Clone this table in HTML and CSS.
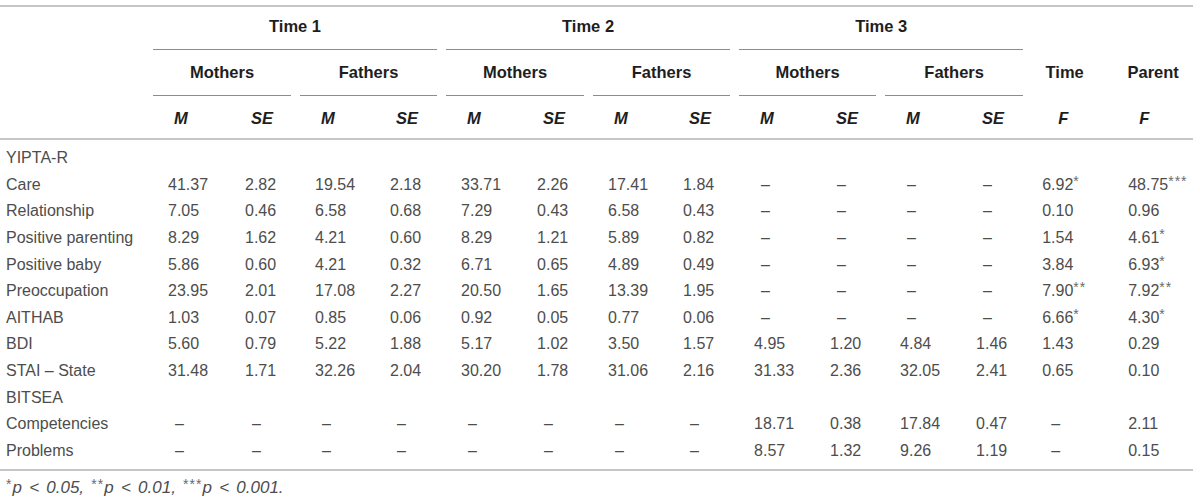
FILE: index.html
```html
<!DOCTYPE html>
<html lang="en">
<head>
    <meta charset="UTF-8">
    <meta name="viewport" content="width=device-width, initial-scale=1.0">
    <title>Table 2</title>
    <link rel="stylesheet" href="styles.css">
</head>
<body>
    <table class="results">
        <colgroup>
            <col style="width:153px">
            <col style="width:77px"><col style="width:70px"><col style="width:75px"><col style="width:71px">
            <col style="width:76px"><col style="width:71px"><col style="width:75px"><col style="width:71px">
            <col style="width:76px"><col style="width:70px"><col style="width:76px"><col style="width:71px">
            <col style="width:81px"><col style="width:80px">
        </colgroup>
        <thead>
            <tr class="r1">
                <th></th>
                <th colspan="4" class="grp"><div class="rule">Time 1</div></th>
                <th colspan="4" class="grp"><div class="rule">Time 2</div></th>
                <th colspan="4" class="grp"><div class="rule">Time 3</div></th>
                <th colspan="2"><div class="rule none">&nbsp;</div></th>
            </tr>
            <tr class="r2">
                <th><div class="rule none">&nbsp;</div></th>
                <th colspan="2" class="grp"><div class="rule">Mothers</div></th>
                <th colspan="2" class="grp"><div class="rule">Fathers</div></th>
                <th colspan="2" class="grp"><div class="rule">Mothers</div></th>
                <th colspan="2" class="grp"><div class="rule">Fathers</div></th>
                <th colspan="2" class="grp"><div class="rule">Mothers</div></th>
                <th colspan="2" class="grp"><div class="rule">Fathers</div></th>
                <th class="time"><div class="rule none">Time</div></th>
                <th><div class="rule none">Parent</div></th>
            </tr>
            <tr class="r3">
                <th></th>
                <th class="sub">M</th><th class="sub">SE</th><th class="sub">M</th><th class="sub">SE</th>
                <th class="sub">M</th><th class="sub">SE</th><th class="sub">M</th><th class="sub">SE</th>
                <th class="sub">M</th><th class="sub">SE</th><th class="sub">M</th><th class="sub">SE</th>
                <th class="sub f">F</th><th class="sub f">F</th>
            </tr>
        </thead>
        <tbody>
            <tr class="first"><td class="label">YIPTA-R</td><td colspan="14"></td></tr>
            <tr><td class="label">Care</td><td>41.37</td><td>2.82</td><td>19.54</td><td>2.18</td><td>33.71</td><td>2.26</td><td>17.41</td><td>1.84</td><td class="na">–</td><td class="na">–</td><td class="na">–</td><td class="na">–</td><td>6.92<sup>*</sup></td><td>48.75<sup>***</sup></td></tr>
            <tr><td class="label">Relationship</td><td>7.05</td><td>0.46</td><td>6.58</td><td>0.68</td><td>7.29</td><td>0.43</td><td>6.58</td><td>0.43</td><td class="na">–</td><td class="na">–</td><td class="na">–</td><td class="na">–</td><td>0.10</td><td>0.96</td></tr>
            <tr><td class="label">Positive parenting</td><td>8.29</td><td>1.62</td><td>4.21</td><td>0.60</td><td>8.29</td><td>1.21</td><td>5.89</td><td>0.82</td><td class="na">–</td><td class="na">–</td><td class="na">–</td><td class="na">–</td><td>1.54</td><td>4.61<sup>*</sup></td></tr>
            <tr><td class="label">Positive baby</td><td>5.86</td><td>0.60</td><td>4.21</td><td>0.32</td><td>6.71</td><td>0.65</td><td>4.89</td><td>0.49</td><td class="na">–</td><td class="na">–</td><td class="na">–</td><td class="na">–</td><td>3.84</td><td>6.93<sup>*</sup></td></tr>
            <tr><td class="label">Preoccupation</td><td>23.95</td><td>2.01</td><td>17.08</td><td>2.27</td><td>20.50</td><td>1.65</td><td>13.39</td><td>1.95</td><td class="na">–</td><td class="na">–</td><td class="na">–</td><td class="na">–</td><td>7.90<sup>**</sup></td><td>7.92<sup>**</sup></td></tr>
            <tr><td class="label">AITHAB</td><td>1.03</td><td>0.07</td><td>0.85</td><td>0.06</td><td>0.92</td><td>0.05</td><td>0.77</td><td>0.06</td><td class="na">–</td><td class="na">–</td><td class="na">–</td><td class="na">–</td><td>6.66<sup>*</sup></td><td>4.30<sup>*</sup></td></tr>
            <tr><td class="label">BDI</td><td>5.60</td><td>0.79</td><td>5.22</td><td>1.88</td><td>5.17</td><td>1.02</td><td>3.50</td><td>1.57</td><td>4.95</td><td>1.20</td><td>4.84</td><td>1.46</td><td>1.43</td><td>0.29</td></tr>
            <tr><td class="label">STAI – State</td><td>31.48</td><td>1.71</td><td>32.26</td><td>2.04</td><td>30.20</td><td>1.78</td><td>31.06</td><td>2.16</td><td>31.33</td><td>2.36</td><td>32.05</td><td>2.41</td><td>0.65</td><td>0.10</td></tr>
            <tr><td class="label">BITSEA</td><td colspan="14"></td></tr>
            <tr><td class="label">Competencies</td><td class="na">–</td><td class="na">–</td><td class="na">–</td><td class="na">–</td><td class="na">–</td><td class="na">–</td><td class="na">–</td><td class="na">–</td><td>18.71</td><td>0.38</td><td>17.84</td><td>0.47</td><td class="na">–</td><td>2.11</td></tr>
            <tr class="last"><td class="label">Problems</td><td class="na">–</td><td class="na">–</td><td class="na">–</td><td class="na">–</td><td class="na">–</td><td class="na">–</td><td class="na">–</td><td class="na">–</td><td>8.57</td><td>1.32</td><td>9.26</td><td>1.19</td><td class="na">–</td><td>0.15</td></tr>
        </tbody>
    </table>
    <p class="note"><sup>*</sup>p &lt; 0.05, <sup>**</sup>p &lt; 0.01, <sup>***</sup>p &lt; 0.001.</p>
</body>
</html>
```

FILE: styles.css
```css
body{
    margin: 0;
    background: #fff;
    font-family: "Liberation Sans", Arial, sans-serif;
    font-size: 16px;
    color: #4d4d4d;
}
.results{
    margin-top: 5px;
    width: 1193px;
    table-layout: fixed;
    border-collapse: separate;
    border-spacing: 0;
}
th{
    padding: 0;
    font-size: 16.5px;
    font-weight: bold;
    color: #1e1e1e;
    line-height: 20px;
    vertical-align: bottom;
    text-align: center;
}
.r1 th{
    border-top: 2px solid #c6c6c6;
}
.r1 .rule{
    padding: 9px 0 13px;
}
.r2 .rule{
    padding: 12px 0 13px;
}
.rule{
    border-bottom: 1px solid #8c8c8c;
}
.rule.none{
    border-bottom-color: transparent;
}
th.grp{
    padding-right: 9px;
}
th.time{
    padding-right: 16px;
}
.r3 th{
    padding: 12px 0 10px;
    border-bottom: 2px solid #c6c6c6;
}
.r3 th.sub{
    font-style: italic;
    text-align: left;
    padding-left: 21px;
}
.r3 th.f{
    padding-left: 26px;
}
td{
    padding: 3.3px 0 3.3px 15px;
    line-height: 20px;
    white-space: nowrap;
}
td.label{
    padding-left: 6px;
}
td:nth-child(14){
    padding-left: 10px;
}
td.na{
    padding-left: 22px;
}
td.na:nth-child(14){
    padding-left: 19px;
}
.first td{
    padding-top: 8.3px;
}
.last td{
    padding-bottom: 8.3px;
    border-bottom: 2px solid #c6c6c6;
}
sup{
    font-size: 14px;
    line-height: 0;
    vertical-align: 4px;
    letter-spacing: 1px;
    color: #6a6a6a;
}
.note{
    margin: 7px 0 0;
    padding-left: 6px;
    font-size: 17px;
    line-height: 20px;
    font-style: italic;
    word-spacing: 2.5px;
    color: #4d4d4d;
}
.note sup{
    font-style: normal;
    font-size: 14px;
    letter-spacing: 1px;
}
```
